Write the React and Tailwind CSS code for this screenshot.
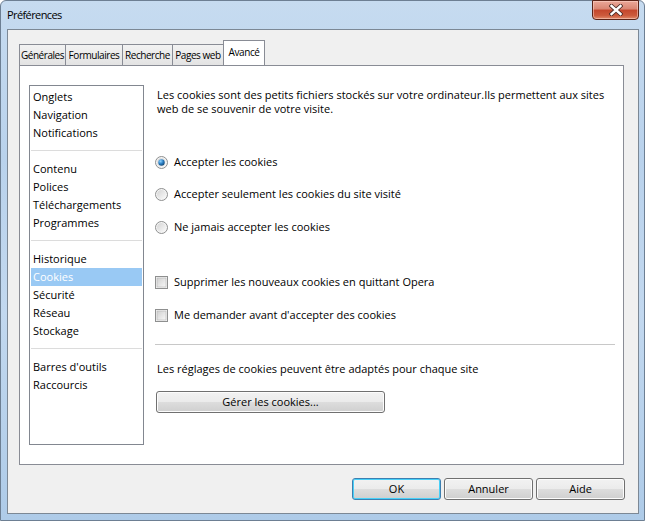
import React from "react";

const font = { fontFamily: '"Open Sans", "Noto Sans", sans-serif' };

function Radio({ checked }) {
  return (
    <svg width="13" height="13" viewBox="0 0 13 13" className="shrink-0">
      <defs>
        <linearGradient id="rbg" x1="0" y1="0" x2="1" y2="1">
          <stop offset="0" stopColor="#d4d4d4" />
          <stop offset="1" stopColor="#fafafa" />
        </linearGradient>
        <radialGradient id="rdot" cx="0.35" cy="0.3" r="0.8">
          <stop offset="0" stopColor="#8fd3ff" />
          <stop offset="0.5" stopColor="#2b7fc4" />
          <stop offset="1" stopColor="#0f3f6a" />
        </radialGradient>
      </defs>
      <circle cx="6.5" cy="6.5" r="6" fill="#f4f4f4" stroke="#8e8f8f" strokeWidth="1" />
      <circle cx="6.5" cy="6.5" r="4.5" fill="url(#rbg)" />
      {checked && <circle cx="6.5" cy="6.5" r="3.2" fill="url(#rdot)" />}
    </svg>
  );
}

function Checkbox() {
  return (
    <svg width="13" height="13" viewBox="0 0 13 13" className="shrink-0">
      <defs>
        <linearGradient id="cbg" x1="0" y1="0" x2="1" y2="1">
          <stop offset="0" stopColor="#d0d0d0" />
          <stop offset="1" stopColor="#f8f8f8" />
        </linearGradient>
      </defs>
      <rect x="0.5" y="0.5" width="12" height="12" fill="#f4f4f4" stroke="#8e8f8f" />
      <rect x="2" y="2" width="9" height="9" fill="url(#cbg)" stroke="#b5b5b5" strokeWidth="0.6" />
    </svg>
  );
}

function WinButton({ children, className = "", isDefault = false }) {
  return (
    <div
      className={
        "h-[22px] rounded-[3px] border flex items-center justify-center text-[11px] text-black bg-[linear-gradient(#f2f2f2_0%,#ebebeb_50%,#dddddd_51%,#cfcfcf_100%)] " +
        (isDefault
          ? "border-[#3c7fb1] shadow-[inset_0_0_0_1px_#48d0f8] "
          : "border-[#707070] shadow-[inset_0_0_0_1px_#fcfcfc] ") +
        className
      }
    >
      {children}
    </div>
  );
}

function Tab({ label, w, active }) {
  if (active) {
    return (
      <div
        className={`relative z-10 -ml-px h-[25px] border border-b-0 border-[#898c95] bg-white flex items-start justify-center pt-[4px] text-[10px] tracking-[-0.4px] whitespace-nowrap text-black ${w}`}
      >
        {label}
      </div>
    );
  }
  return (
    <div
      className={`-ml-px first:ml-0 h-[21px] border border-b-0 border-[#898c95] bg-[linear-gradient(#f2f2f2,#e3e3e3)] flex items-center justify-center text-[10px] tracking-[-0.45px] whitespace-nowrap text-black ${w}`}
    >
      {label}
    </div>
  );
}

function SideItem({ label, selected }) {
  return (
    <div
      className={
        "h-[18px] leading-[18px] pl-[2px] text-[11px] whitespace-nowrap " +
        (selected ? "bg-[#99c9f4] text-white" : "text-black")
      }
    >
      {label}
    </div>
  );
}

function Sep() {
  return <div className="mt-[8px] mb-[9px] h-px bg-[#dcdcdc]" />;
}

export default function App() {
  return (
    <div style={font} className="w-[645px] h-[521px] overflow-hidden">
      <div className="w-[645px] h-[521px] flex flex-col border border-[#6d7f93] rounded-t-[6px] bg-[linear-gradient(180deg,#c6dbf0_0%,#b9d2ec_30%,#c2d8ef_60%,#aecbe8_100%)]">
        {/* Title bar */}
        <div className="h-[28px] flex items-start justify-between">
          <div className="pl-[6px] pt-[6px] text-[11px] tracking-[-0.6px] text-black">Préférences</div>
          <div className="mr-[5px] -mt-px w-[47px] h-[20px] rounded-b-[4px] border border-[#5b2418] bg-[linear-gradient(#eba899_0%,#d98572_45%,#c4462c_50%,#cc5a3c_80%,#e08a6a_100%)] shadow-[inset_0_0_0_1px_rgba(255,220,210,0.5)] flex items-center justify-center">
            <svg width="14" height="12" viewBox="0 0 14 12">
              <path d="M2.5 2 L11.5 10 M11.5 2 L2.5 10" stroke="#4a2a25" strokeWidth="4.2" strokeLinecap="square" />
              <path d="M2.5 2 L11.5 10 M11.5 2 L2.5 10" stroke="#ffffff" strokeWidth="2.4" strokeLinecap="square" />
            </svg>
          </div>
        </div>

        {/* Client area */}
        <div className="ml-[6px] mr-[5px] mb-[6px] flex-1 border border-[#7c8895] bg-[#f0f0f0] flex flex-col">
          {/* Tabs */}
          <div className="ml-[11px] mt-[11px] h-[24px] flex items-end">
            <Tab label="Générales" w="w-[47px]" />
            <Tab label="Formulaires" w="w-[58px]" />
            <Tab label="Recherche" w="w-[51px]" />
            <Tab label="Pages web" w="w-[52px]" />
            <Tab label="Avancé" w="w-[42px]" active />
          </div>

          {/* Panel */}
          <div className="ml-[11px] w-[605px] h-[400px] border border-[#898c95] bg-white flex items-start">
            {/* Sidebar */}
            <div className="ml-[9px] mt-[19px] w-[115px] h-[360px] border border-[#828790] bg-white px-px pt-[2px]">
              <SideItem label="Onglets" />
              <SideItem label="Navigation" />
              <SideItem label="Notifications" />
              <Sep />
              <SideItem label="Contenu" />
              <SideItem label="Polices" />
              <SideItem label="Téléchargements" />
              <SideItem label="Programmes" />
              <Sep />
              <SideItem label="Historique" />
              <SideItem label="Cookies" selected />
              <SideItem label="Sécurité" />
              <SideItem label="Réseau" />
              <SideItem label="Stockage" />
              <Sep />
              <SideItem label="Barres d'outils" />
              <SideItem label="Raccourcis" />
            </div>

            {/* Content */}
            <div className="ml-[11px] w-[460px] flex flex-col text-[11px] text-black">
              <p className="mt-[22px] pl-[2px] leading-[14px] whitespace-nowrap">
                Les cookies sont des petits fichiers stockés sur votre ordinateur.Ils permettent aux sites
                <br />
                web de se souvenir de votre visite.
              </p>

              <div className="mt-[38px] h-[16px] flex items-center gap-[6px]">
                <Radio checked />
                <span>Accepter les cookies</span>
              </div>
              <div className="mt-[16px] h-[16px] flex items-center gap-[6px]">
                <Radio />
                <span>Accepter seulement les cookies du site visité</span>
              </div>
              <div className="mt-[17px] h-[16px] flex items-center gap-[6px]">
                <Radio />
                <span>Ne jamais accepter les cookies</span>
              </div>

              <div className="mt-[39px] h-[16px] flex items-center gap-[6px]">
                <Checkbox />
                <span>Supprimer les nouveaux cookies en quittant Opera</span>
              </div>
              <div className="mt-[17px] h-[16px] flex items-center gap-[6px]">
                <Checkbox />
                <span>Me demander avant d'accepter des cookies</span>
              </div>

              <div className="mt-[21px] h-px bg-[#c8c8c8]" />

              <p className="mt-[17px] pl-[2px] leading-[14px]">
                Les réglages de cookies peuvent être adaptés pour chaque site
              </p>

              <WinButton className="mt-[15px] ml-px w-[229px]">Gérer les cookies...</WinButton>
            </div>
          </div>

          {/* Bottom buttons */}
          <div className="mt-[13px] mr-[13px] flex justify-end gap-[3px]">
            <WinButton isDefault className="w-[89px]">OK</WinButton>
            <WinButton className="w-[89px]">Annuler</WinButton>
            <WinButton className="w-[89px]">Aide</WinButton>
          </div>
        </div>
      </div>
    </div>
  );
}
